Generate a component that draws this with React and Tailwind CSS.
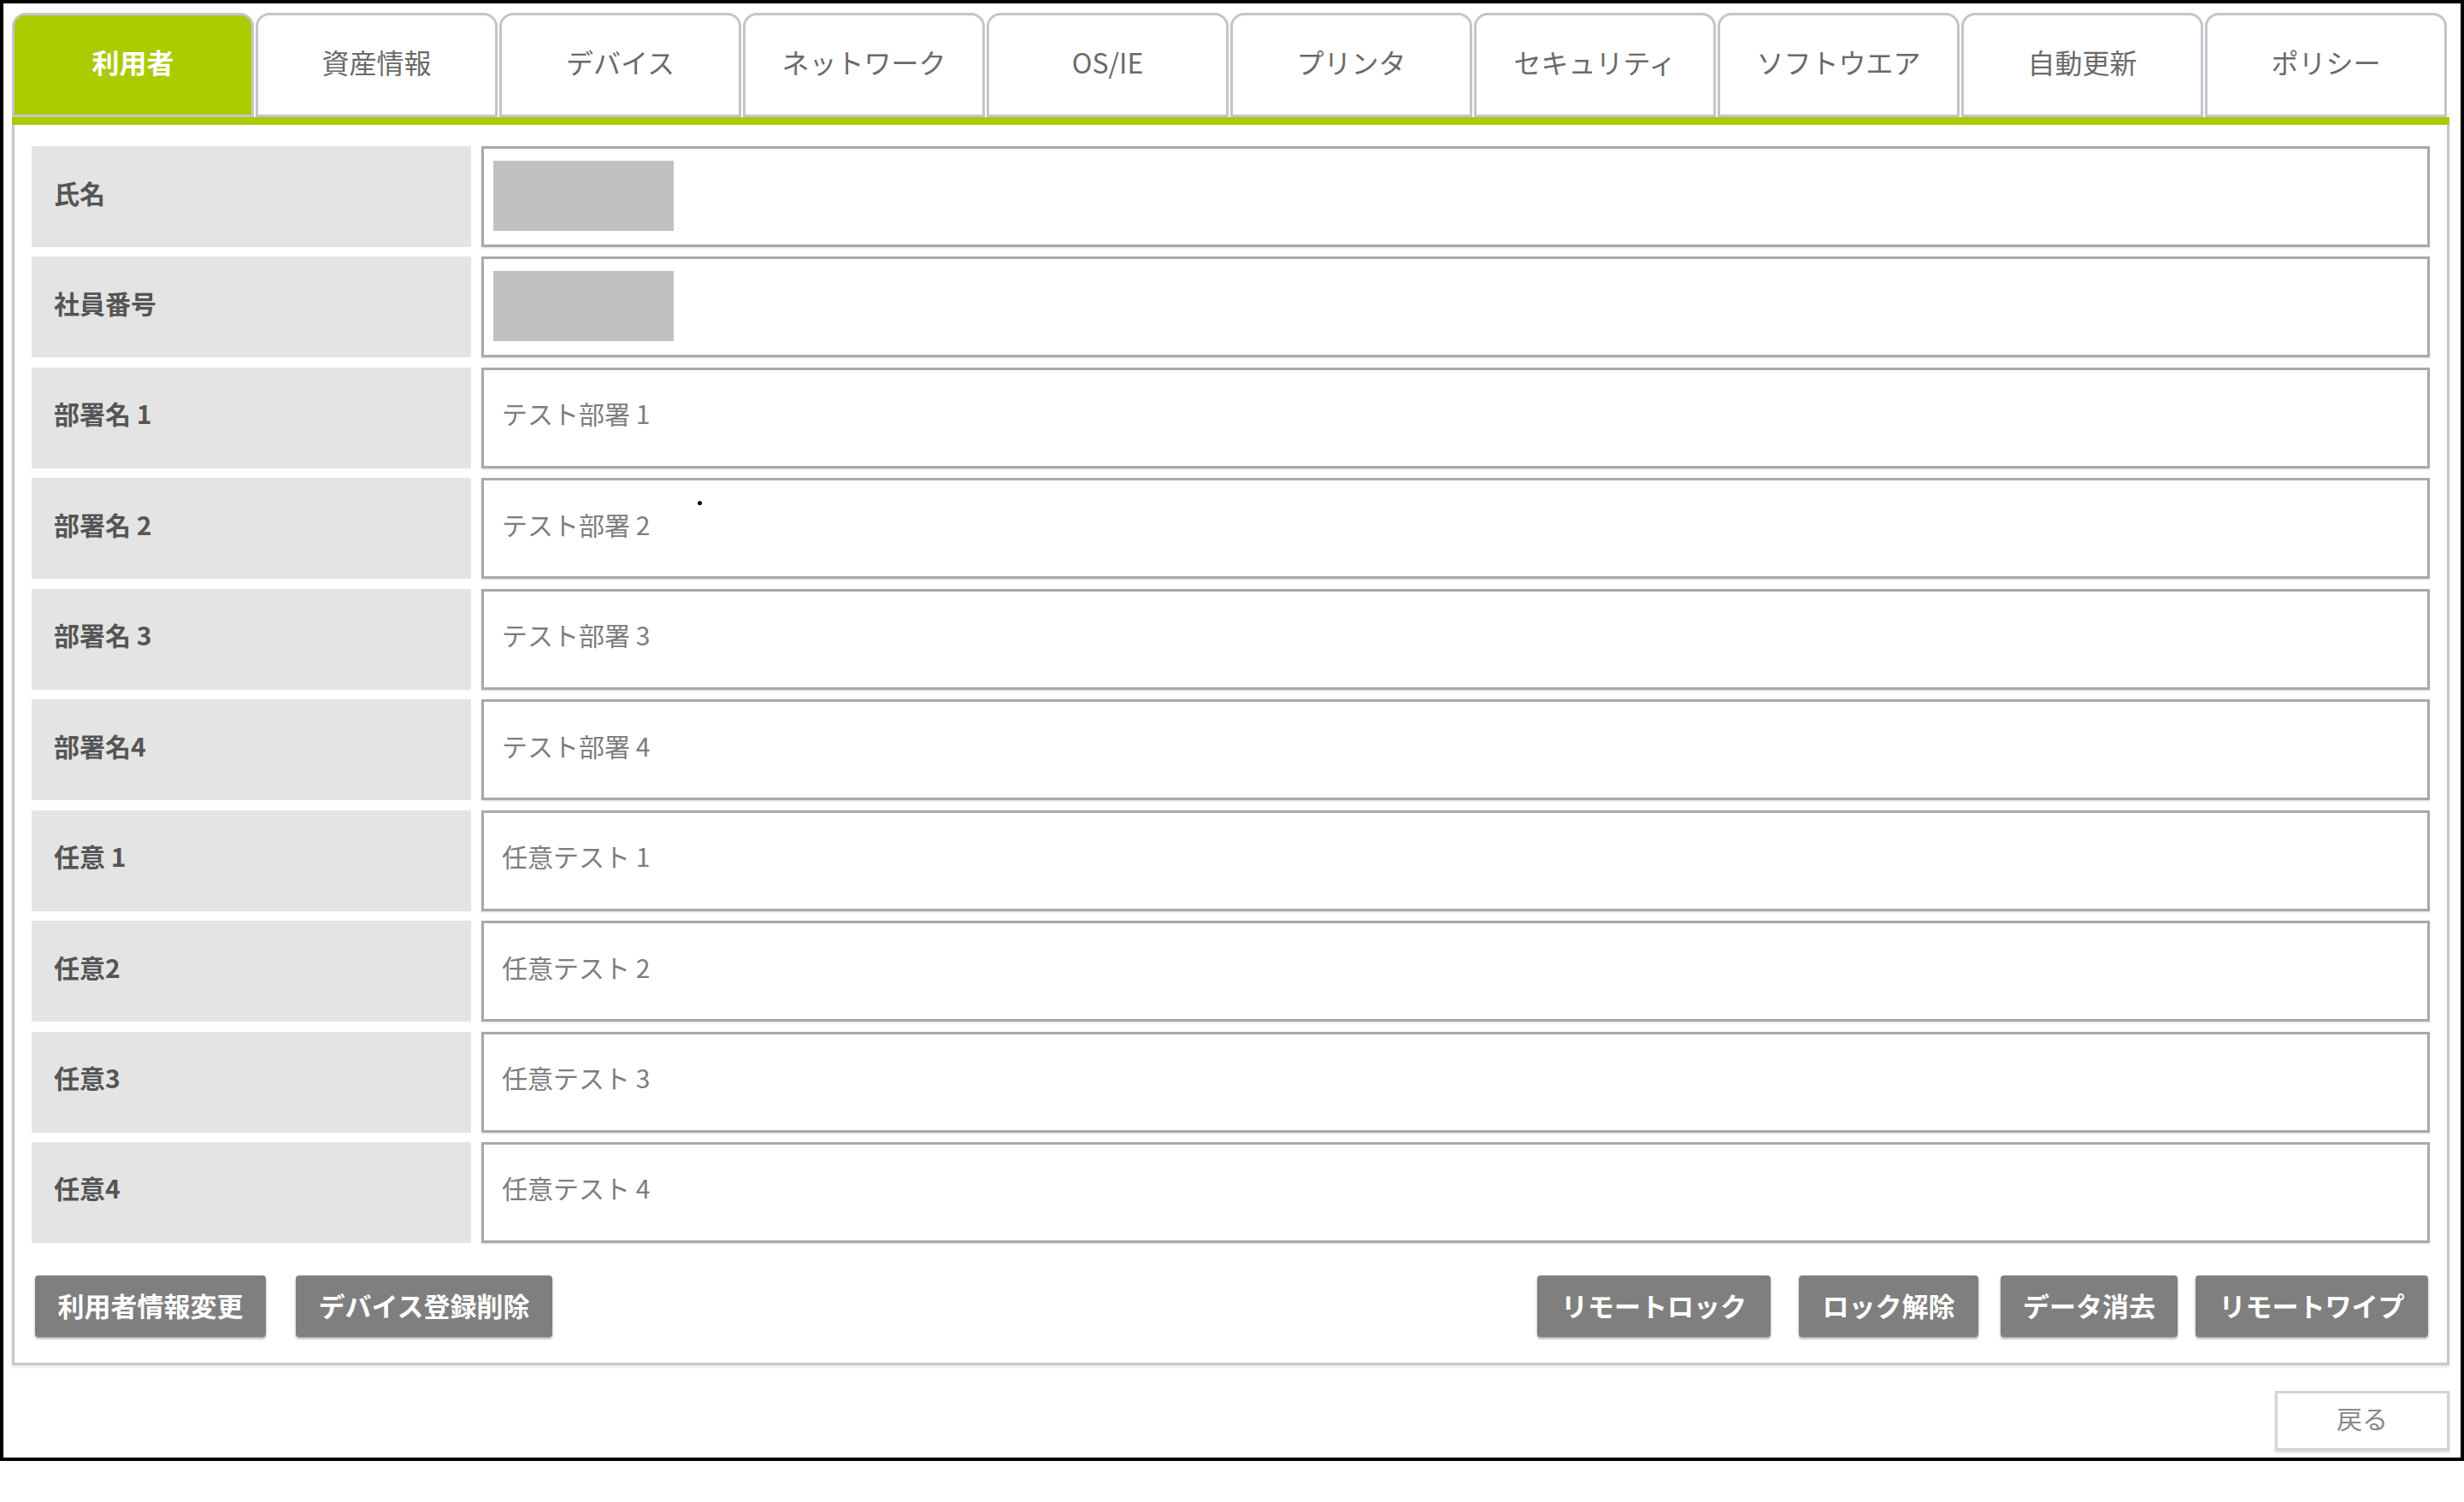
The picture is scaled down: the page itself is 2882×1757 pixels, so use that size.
import React from "react";

const tabs = ["利用者", "資産情報", "デバイス", "ネットワーク", "OS/IE", "プリンタ", "セキュリティ", "ソフトウエア", "自動更新", "ポリシー"];

const rows = [
  { label: "氏名", box: true },
  { label: "社員番号", box: true },
  { label: "部署名 1", value: "テスト部署 1" },
  { label: "部署名 2", value: "テスト部署 2", dot: true },
  { label: "部署名 3", value: "テスト部署 3" },
  { label: "部署名4", value: "テスト部署 4" },
  { label: "任意 1", value: "任意テスト 1" },
  { label: "任意2", value: "任意テスト 2" },
  { label: "任意3", value: "任意テスト 3" },
  { label: "任意4", value: "任意テスト 4" },
];

function Btn({ children, w, className = "" }) {
  return (
    <div
      className={`h-[72px] ${w} ${className} flex items-center justify-center pb-[2px] rounded-[4px] bg-[#7f7f7f] text-white font-bold text-[31px] shadow-[0_2px_3px_rgba(0,0,0,0.35)]`}
    >
      {children}
    </div>
  );
}

export default function App() {
  return (
    <div className="w-[2882px] h-[1757px] bg-white font-['Noto_Sans_CJK_JP',sans-serif]">
      <div className="h-[1709px] border-4 border-black pl-[10px] pr-[13px] pt-[11px]">
        <div className="flex gap-[2px] h-[122px] pr-[3px]">
          {tabs.map((t, i) => (
            <div
              key={t}
              className={
                i === 0
                  ? "flex-1 flex items-center justify-center pb-[8px] rounded-t-[16px] border-[3px] border-[#c4c4cc] bg-[#abcb00] text-white font-bold text-[32px]"
                  : "flex-1 flex items-center justify-center pb-[8px] rounded-t-[16px] border-[3px] border-[#c4c4cc] bg-white text-[#6a6a6a] text-[32px]"
              }
            >
              {t}
            </div>
          ))}
        </div>
        <div className="h-[9px] bg-[#abcb00]" />
        <div className="border-x-[3px] border-b-[3px] border-[#c8c8c8] pt-[25px] pl-[20px] pr-[20px] pb-[30px] shadow-[0_2px_3px_rgba(0,0,0,0.12)]">
          <div className="flex flex-col gap-[11.45px]">
            {rows.map((r) => (
              <div key={r.label} className="flex h-[118px] gap-[12px]">
                <div className="w-[514px] shrink-0 bg-[#e4e4e4] flex items-center pl-[26px] pb-[10px] text-[30px] font-bold text-[#555555]">
                  {r.label}
                </div>
                <div className="relative flex-1 border-[3px] border-[#a9a9a9] bg-white flex items-center pl-[21px] text-[30px] text-[#7d7d7d] shadow-[0_1px_2px_rgba(0,0,0,0.15)]">
                  {r.box ? (
                    <div className="w-[211px] h-[82px] bg-[#c1c1c1] -ml-[10px] -mt-[2px]" />
                  ) : (
                    <span className="-mt-[10px]">{r.value}</span>
                  )}
                  {r.dot && <div className="absolute left-[250px] top-[24px] w-[5px] h-[5px] rounded-full bg-black" />}
                </div>
              </div>
            ))}
          </div>
          <div className="flex mt-[38px] pl-[4px] pr-[2px]">
            <Btn w="w-[270px]">利用者情報変更</Btn>
            <Btn w="w-[300px]" className="ml-[35px]">デバイス登録削除</Btn>
            <div className="flex-1" />
            <Btn w="w-[273px]">リモートロック</Btn>
            <Btn w="w-[210px]" className="ml-[33px]">ロック解除</Btn>
            <Btn w="w-[207px]" className="ml-[26px]">データ消去</Btn>
            <Btn w="w-[272px]" className="ml-[21px]">リモートワイプ</Btn>
          </div>
        </div>
        <div className="flex justify-end mt-[30px]">
          <div className="w-[204px] h-[70px] border-[3px] border-[#d4d4d4] bg-white flex items-center justify-center pb-[6px] text-[30px] text-[#888888] shadow-[0_2px_3px_rgba(0,0,0,0.15)]">
            戻る
          </div>
        </div>
      </div>
    </div>
  );
}
